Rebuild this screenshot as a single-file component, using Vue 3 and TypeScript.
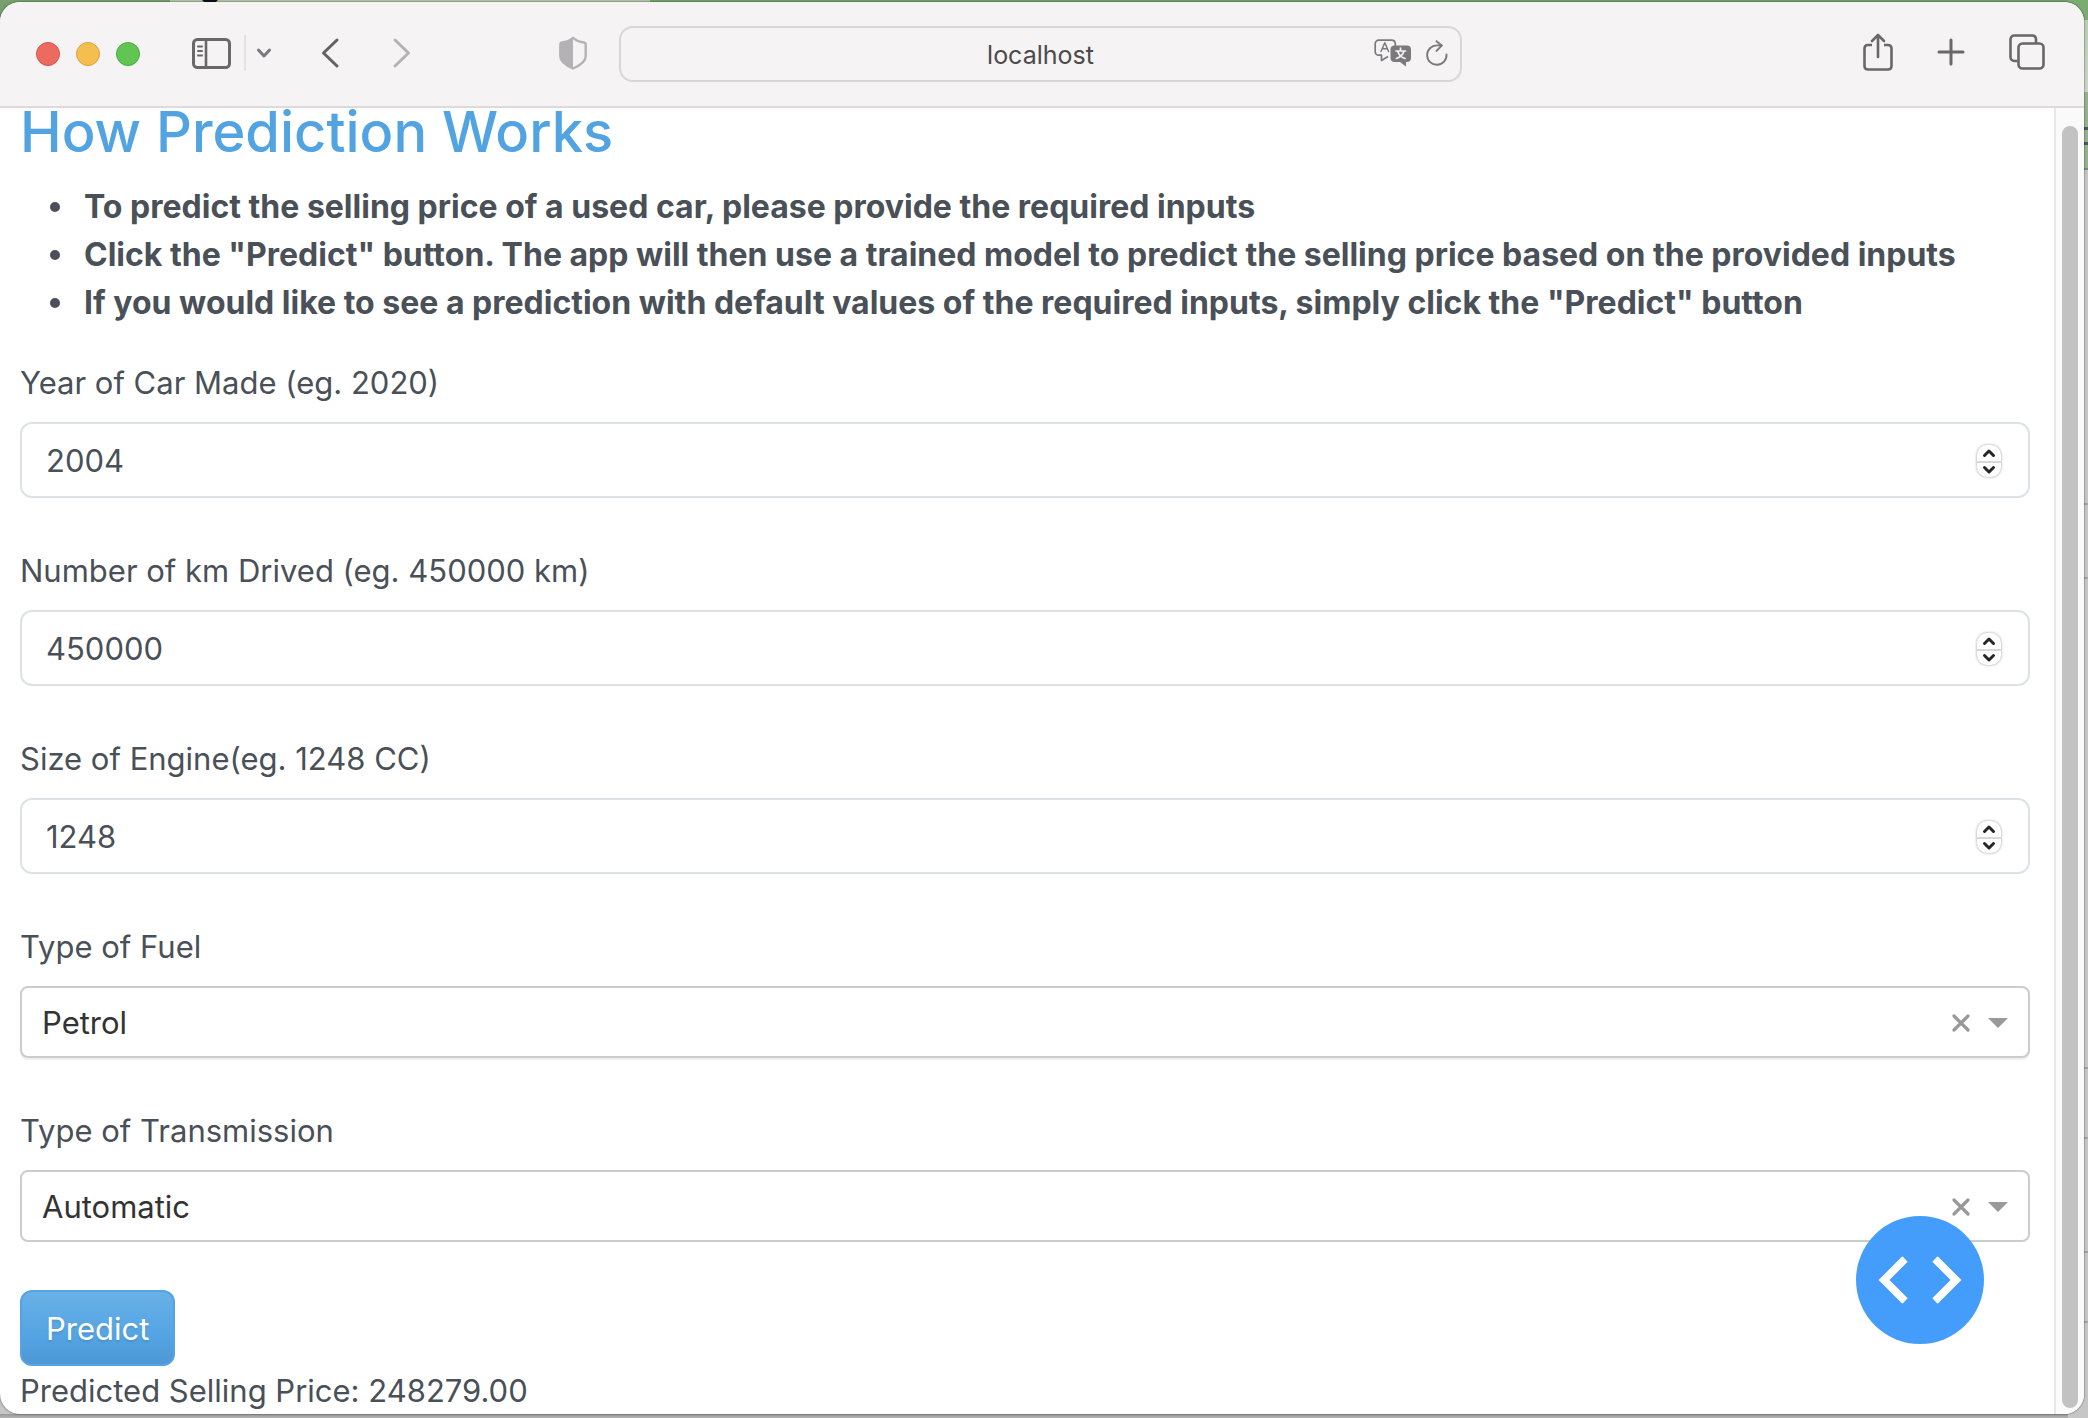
<script setup lang="ts">
import { ref } from 'vue'

interface NumberField {
  id: string
  label: string
  value: number
}

interface SelectField {
  id: string
  label: string
  value: string
  options: string[]
  raised: boolean
}

const address = ref('localhost')

const tips: string[] = [
  'To predict the selling price of a used car, please provide the required inputs',
  'Click the "Predict" button. The app will then use a trained model to predict the selling price based on the provided inputs',
  'If you would like to see a prediction with default values of the required inputs, simply click the "Predict" button',
]

const numberFields = ref<NumberField[]>([
  { id: 'year', label: 'Year of Car Made (eg. 2020)', value: 2004 },
  { id: 'km', label: 'Number of km Drived (eg. 450000 km)', value: 450000 },
  { id: 'engine', label: 'Size of Engine(eg. 1248 CC)', value: 1248 },
])

const selectFields = ref<SelectField[]>([
  { id: 'fuel', label: 'Type of Fuel', value: 'Petrol', options: ['Petrol', 'Diesel', 'CNG', 'LPG'], raised: true },
  { id: 'transmission', label: 'Type of Transmission', value: 'Automatic', options: ['Automatic', 'Manual'], raised: false },
])

const price = ref('248279.00')
</script>

<template>
  <div class="desktop">
    <div class="window">
      <header class="toolbar">
        <div class="tools tools-left">
          <div class="lights">
            <button class="light red" aria-label="Close"></button>
            <button class="light yellow" aria-label="Minimize"></button>
            <button class="light green" aria-label="Zoom"></button>
          </div>
          <button class="tool sidebar" aria-label="Sidebar">
            <svg width="40" height="32" viewBox="0 0 40 32" fill="none" stroke="#6a6769" stroke-linecap="round">
              <rect x="1.5" y="2.5" width="36" height="28" rx="4" stroke-width="3" />
              <path d="M14 3v27" stroke-width="2.6" />
              <path d="M6 9.500h4M6 14h4M6 18.500h4" stroke-width="2" />
            </svg>
          </button>
          <span class="divider"></span>
          <button class="tool menu" aria-label="Tab groups">
            <svg width="16" height="12" viewBox="0 0 16 12" fill="none" stroke="#7b797b" stroke-width="3" stroke-linecap="round" stroke-linejoin="round">
              <path d="M2.500 3l5.500 6 5.500-6" />
            </svg>
          </button>
          <button class="tool back" aria-label="Back">
            <svg width="20" height="32" viewBox="0 0 20 32" fill="none" stroke="#636163" stroke-width="3" stroke-linecap="round" stroke-linejoin="round">
              <path d="M17 3L3.500 16 17 29" />
            </svg>
          </button>
          <button class="tool forward" aria-label="Forward">
            <svg width="20" height="32" viewBox="0 0 20 32" fill="none" stroke="#b4b2b4" stroke-width="3" stroke-linecap="round" stroke-linejoin="round">
              <path d="M3 3l13.500 13L3 29" />
            </svg>
          </button>
          <button class="tool shield" aria-label="Privacy report">
            <svg width="28" height="34" viewBox="0 0 28 34">
              <path d="M14 1.800C11 4.500 7 6 3.200 6.500 1.900 6.700 1.300 7.500 1.300 8.800v11.500c0 6 6.500 9.500 12.700 12.200 6.200-2.700 12.700-6.200 12.700-12.200V8.800c0-1.300-.6-2.100-1.900-2.300C21 6 17 4.500 14 1.800z" fill="none" stroke="#b4b2b4" stroke-width="2.400" stroke-linejoin="round" />
              <path d="M14 1.800C11 4.500 7 6 3.200 6.500 1.900 6.700 1.300 7.500 1.300 8.800v11.500c0 6 6.500 9.500 12.700 12.200z" fill="#b4b2b4" />
            </svg>
          </button>
        </div>

        <div class="urlbar">
          <span class="url-side"></span>
          <input v-model="address" class="url" type="text" aria-label="Address" />
          <span class="url-side url-icons">
            <button class="tool" aria-label="Translate">
              <svg width="38" height="28" viewBox="0 0 38 28">
                <path d="M14 17.500L7.500 21.500V16.200H5C2.600 16.200 1.200 14.800 1.200 12.500V5C1.200 2.700 2.600 1.200 5 1.200h12.500c2.400 0 3.800 1.500 3.800 3.800v2" fill="none" stroke="#7b797b" stroke-width="1.700" stroke-linejoin="round" />
                <path d="M7 12.500L10.800 3.800l3.800 8.700M8.300 9.700h5" fill="none" stroke="#7b797b" stroke-width="1.500" stroke-linecap="round" stroke-linejoin="round" />
                <path d="M20.500 6.500h12.500c2.500 0 4 1.500 4 4V19c0 2.500-1.500 4-4 4h-1v4.500L26 23h-5.500c-2.500 0-4-1.500-4-4v-8.500c0-2.500 1.500-4 4-4z" fill="#7b797b" />
                <path d="M26.500 9v2.500M22 12h9.500M29.800 12.500c-1 3.500-3.600 5.800-7.500 7M23.800 12.500c1 3.500 3.500 5.800 7.300 7" fill="none" stroke="#f5f3f4" stroke-width="1.700" stroke-linecap="round" />
              </svg>
            </button>
            <button class="tool" aria-label="Reload">
              <svg width="22" height="26" viewBox="0 0 22 26" fill="none" stroke="#7b797b" stroke-width="1.900" stroke-linecap="round" stroke-linejoin="round">
                <path d="M20.500 14.500A9.700 9.700 0 1 1 11 5.400h4.500" />
                <path d="M10.500 1.200l5.300 4.300-5.300 5.400" />
              </svg>
            </button>
          </span>
        </div>

        <div class="tools tools-right">
          <button class="tool" aria-label="Share">
            <svg width="30" height="38" viewBox="0 0 30 38" fill="none" stroke="#6a6769" stroke-width="2.600" stroke-linecap="round" stroke-linejoin="round">
              <path d="M9 12H5c-2.200 0-3.500 1.300-3.500 3.500V33c0 2.200 1.300 3.500 3.500 3.500h20c2.200 0 3.500-1.300 3.500-3.500V15.500c0-2.200-1.300-3.500-3.500-3.500h-4" stroke-linecap="butt" />
              <path d="M15 24V2.500M9 8l6-6 6 6" />
            </svg>
          </button>
          <button class="tool" aria-label="New tab">
            <svg width="28" height="28" viewBox="0 0 28 28" fill="none" stroke="#6a6769" stroke-width="3" stroke-linecap="round">
              <path d="M14 2v24M2 14h24" />
            </svg>
          </button>
          <button class="tool" aria-label="Tab overview">
            <svg width="36" height="36" viewBox="0 0 36 36" fill="none" stroke="#6a6769" stroke-width="2.600">
              <path d="M8.500 27H5.500c-2.500 0-4-1.500-4-4V5.500c0-2.500 1.500-4 4-4H23c2.500 0 4 1.500 4 4v3.500" />
              <rect x="9.500" y="9.500" width="25" height="25" rx="4" />
            </svg>
          </button>
        </div>
      </header>

      <div class="viewport">
        <main class="page">
          <h2>How Prediction Works</h2>
          <ul class="tips">
            <li v-for="tip in tips" :key="tip">{{ tip }}</li>
          </ul>

          <div v-for="field in numberFields" :key="field.id" class="field">
            <label :for="field.id">{{ field.label }}</label>
            <div class="number-box">
              <input :id="field.id" v-model.number="field.value" type="number" />
              <span class="stepper">
                <button aria-label="Increase" @click="field.value++">
                  <svg width="14" height="10" viewBox="0 0 14 10"><path d="M2.500 7.500L7 3l4.500 4.500" /></svg>
                </button>
                <button aria-label="Decrease" @click="field.value--">
                  <svg width="14" height="10" viewBox="0 0 14 10"><path d="M2.500 2.500L7 7l4.500-4.500" /></svg>
                </button>
              </span>
            </div>
          </div>

          <div v-for="field in selectFields" :key="field.id" class="field">
            <label :for="field.id">{{ field.label }}</label>
            <div class="select-box" :class="{ raised: field.raised }">
              <select :id="field.id" v-model="field.value">
                <option v-for="option in field.options" :key="option">{{ option }}</option>
              </select>
              <span class="select-icons">
                <button class="clear" aria-label="Clear" @click="field.value = ''">
                  <svg width="18" height="18" viewBox="0 0 18 18"><path d="M2 2l14 14M16 2L2 16" stroke="#999" stroke-width="3.200" stroke-linecap="round" /></svg>
                </button>
                <svg width="20" height="10" viewBox="0 0 20 10"><path d="M0 0h20L10 10z" fill="#999" /></svg>
              </span>
            </div>
          </div>

          <button class="predict">Predict</button>
          <p class="result">Predicted Selling Price: {{ price }}</p>

          <button class="devtools" aria-label="Developer tools">
            <svg width="128" height="128" viewBox="0 0 128 128" fill="none" stroke="#fff" stroke-width="7.600">
              <path d="M49 43L28 64l21 21M79 43l21 21-21 21" />
            </svg>
          </button>
        </main>
        <div class="scrollbar"><div class="thumb"></div></div>
      </div>
    </div>
  </div>
</template>

<style>
body {
  margin: 0;
}
</style>

<style scoped>
.desktop {
  box-sizing: border-box;
  min-height: 100vh;
  padding: 2px 4px 4px 0;
  font-family: Inter, 'Liberation Sans', sans-serif;
  color: #495057;
  background:
    radial-gradient(ellipse 8px 3px at 210px 0, #111 90%, transparent) no-repeat,
    linear-gradient(90deg, #76a06d 170px, #b1c7aa 170px, #b1c7aa 650px, #73a36a 650px) 0 0 / calc(100% - 20px) 20px no-repeat,
    linear-gradient(#979797, #b5b5b5) 0 100% / calc(100% - 20px) 4px no-repeat,
    linear-gradient(#7aac72 20px, #b8d0b3 20px, #c9d6c6 92px, #94b38d 92px, #94b38d 127px, #4d5560 127px, #4d5560 130px, #94b38d 130px, #94b38d 142px, #4d5560 142px, #4d5560 145px, #94b38d 145px, #94b38d 168px, #7b8b79 168px, #7b8b79 170px, #c6c6c6 170px, #c6c6c6 503px, #a2a2a5 503px, #a2a2a5 505px, #c6c6c6 505px, #c6c6c6 577px, #a2a2a5 577px, #a2a2a5 579px, #c6c6c6 579px, #c6c6c6 1067px, #a2a2a5 1067px, #a2a2a5 1069px, #c6c6c6 1069px, #c6c6c6 1137px, #a2a2a5 1137px, #a2a2a5 1139px, #c6c6c6 1139px, #c6c6c6 1251px, #a2a2a5 1251px, #a2a2a5 1253px, #c6c6c6 1253px, #c6c6c6 1321px, #a2a2a5 1321px, #a2a2a5 1323px, #c6c6c6 1323px);
}

button {
  margin: 0;
  padding: 0;
  border: 0;
  background: none;
  font: inherit;
}

svg {
  display: block;
}

.window {
  border-radius: 20px;
  overflow: hidden;
  background: #fff;
  box-shadow: 0 0 2px rgba(0, 0, 0, 0.7);
}

.toolbar {
  display: grid;
  grid-template-columns: 1fr 42% 1fr;
  align-items: center;
  height: 104px;
  padding: 0 39px 0 36px;
  background: #f5f3f4;
  border-bottom: 2px solid #dcdadb;
}

.tools {
  display: flex;
  align-items: center;
  padding-bottom: 2px;
}

.tools-left {
  padding-right: 32px;
}

.tools-right {
  justify-content: flex-end;
  gap: 44px;
  padding-bottom: 4px;
}

.lights {
  display: flex;
  gap: 16px;
  padding-top: 2px;
}

.light {
  box-sizing: border-box;
  width: 24px;
  height: 24px;
  border: 1px solid;
  border-radius: 50%;
}

.red {
  background: #ed6a5e;
  border-color: #d5554b;
}

.yellow {
  background: #f5bf4f;
  border-color: #dba33d;
}

.green {
  background: #61c554;
  border-color: #4ba93e;
}

.sidebar {
  margin-left: 52px;
}

.divider {
  width: 2px;
  height: 36px;
  margin: 0 10px 0 12px;
  background: #e4e2e3;
}

.back {
  margin-left: 48px;
}

.forward {
  margin-left: 52px;
}

.shield {
  margin-left: auto;
}

.urlbar {
  box-sizing: border-box;
  display: flex;
  align-items: center;
  height: 56px;
  padding: 0 12px;
  border: 2px solid #d8d6d7;
  border-radius: 14px;
}

.url-side {
  flex: 0 0 76px;
}

.url-icons {
  display: flex;
  justify-content: flex-end;
  gap: 14px;
  padding-bottom: 2px;
}

.url {
  flex: 1;
  min-width: 0;
  padding: 2px 0 0;
  border: 0;
  outline: 0;
  background: none;
  color: #4c4a4b;
  font: 400 25px/36px Inter, 'Liberation Sans', sans-serif;
  text-align: center;
}

.viewport {
  display: flex;
}

.page {
  position: relative;
  flex: 1;
  min-width: 0;
  padding: 0 24px 0 20px;
  font-size: 31px;
  line-height: 48px;
}

h2 {
  margin: 0 0 27px;
  color: #52a3e2;
  font-size: 56px;
  font-weight: 500;
  line-height: 48px;
}

.tips {
  margin: 0 0 31px;
  padding-left: 64px;
  font-size: 32px;
  font-weight: 700;
  list-style: none;
}

.tips li::before {
  content: '';
  display: inline-block;
  width: 10px;
  height: 10px;
  margin: 0 24px 0 -34px;
  border-radius: 50%;
  background: currentColor;
  vertical-align: 6px;
}

.field {
  margin-bottom: 48px;
}

.field label {
  display: block;
  padding-top: 1px;
  margin-bottom: 15px;
}

.number-box {
  box-sizing: border-box;
  display: flex;
  align-items: center;
  height: 76px;
  padding: 2px 27px 0 24px;
  border: 2px solid #dee2e6;
  border-radius: 12px;
}

.number-box input {
  flex: 1;
  min-width: 0;
  padding: 0;
  border: 0;
  outline: 0;
  background: none;
  color: inherit;
  font: inherit;
  appearance: textfield;
}

.number-box input::-webkit-inner-spin-button {
  appearance: none;
}

.stepper {
  display: flex;
  flex-direction: column;
  border-radius: 10px;
  box-shadow: 0 0 3px rgba(0, 0, 0, 0.4);
}

.stepper button {
  display: flex;
  align-items: center;
  justify-content: center;
  width: 24px;
  height: 16px;
}

.stepper button + button {
  border-top: 2px solid #d8d8d8;
}

.stepper path {
  fill: none;
  stroke: #262626;
  stroke-width: 3;
  stroke-linecap: round;
  stroke-linejoin: round;
}

.select-box {
  position: relative;
  display: flex;
}

.select-box select {
  width: 100%;
  height: 72px;
  padding: 2px 90px 0 20px;
  border: 2px solid #ccc;
  border-radius: 8px;
  outline: 0;
  background: #fff;
  color: #333;
  font: inherit;
  appearance: none;
}

.raised select {
  box-shadow: 0 2px 0 rgba(0, 0, 0, 0.06);
}

.select-icons {
  position: absolute;
  top: 2px;
  right: 22px;
  bottom: 0;
  display: flex;
  align-items: center;
  gap: 18px;
}

.predict {
  display: block;
  height: 76px;
  padding: 2px 24px 0;
  border: 2px solid #54a3e3;
  border-radius: 12px;
  background: linear-gradient(#69b1e7, #54a4e3 60%, #4d98d5);
  color: #fff;
  text-shadow: 0 2px 2px rgba(0, 0, 0, 0.1);
}

.result {
  height: 48px;
  margin: 0;
  padding-top: 1px;
  box-sizing: border-box;
}

.devtools {
  position: absolute;
  right: 70px;
  bottom: 70px;
  border-radius: 50%;
  background: #449dfa;
}

.scrollbar {
  display: flex;
  box-sizing: border-box;
  flex: 0 0 30px;
  padding: 18px 0 6px;
  border-left: 2px solid #e8e8e8;
  background: #fafafa;
}

.thumb {
  width: 16px;
  margin-left: 6px;
  border-radius: 8px;
  background: #c2c2c2;
}
</style>
